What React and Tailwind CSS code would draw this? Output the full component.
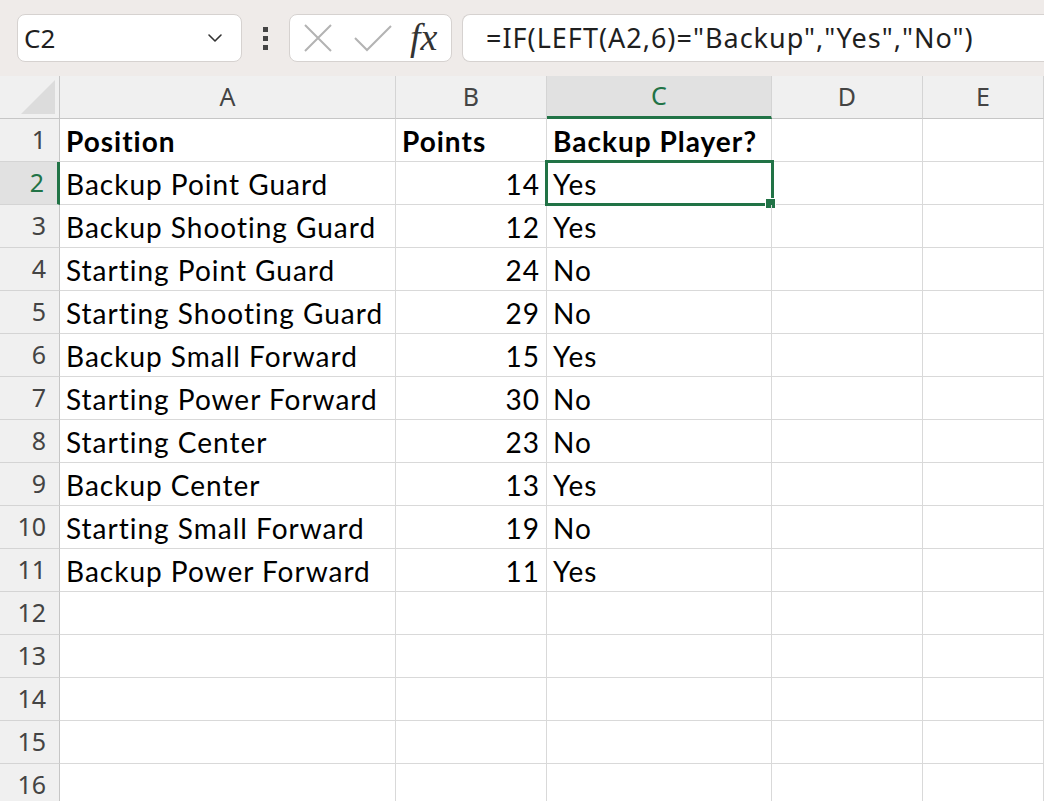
import { ChevronDown } from "lucide-react";

const COLS = ["A", "B", "C", "D", "E"];
const WIDTHS = ["w-[336px]", "w-[151px]", "w-[225px]", "w-[151px]", "flex-1"];

const rows = [
  ["Backup Point Guard", 14, "Yes"],
  ["Backup Shooting Guard", 12, "Yes"],
  ["Starting Point Guard", 24, "No"],
  ["Starting Shooting Guard", 29, "No"],
  ["Backup Small Forward", 15, "Yes"],
  ["Starting Power Forward", 30, "No"],
  ["Starting Center", 23, "No"],
  ["Backup Center", 13, "Yes"],
  ["Starting Small Forward", 19, "No"],
  ["Backup Power Forward", 11, "Yes"],
];

const cellFont = { fontFamily: "Lato, 'Open Sans', sans-serif" };
const uiFont = { fontFamily: "'Noto Sans', 'Open Sans', sans-serif" };

function FormulaBar() {
  return (
    <div className="flex h-[76px] items-center bg-[#efebe9] pl-[17px]" style={uiFont}>
      <div className="flex h-[48px] w-[225px] items-center justify-between rounded-[8px] border border-[#d6d2d0] bg-white pl-[6px] pr-[14px]">
        <span className="text-[26px] text-[#1f1f1f]">C2</span>
        <ChevronDown size={24} strokeWidth={1.6} className="text-[#333]" />
      </div>
      <div className="mx-[21px] flex flex-col gap-[4px]">
        <span className="block h-[5px] w-[5px] bg-[#444]" />
        <span className="block h-[5px] w-[5px] bg-[#444]" />
        <span className="block h-[5px] w-[5px] bg-[#444]" />
      </div>
      <div className="flex h-[48px] w-[163px] items-center rounded-[8px] border border-[#d6d2d0] bg-white">
        <svg width="30" height="30" viewBox="0 0 30 30" className="ml-[13px]">
          <path d="M2 2 L28 28 M28 2 L2 28" stroke="#b3b3b3" strokeWidth="2" fill="none" />
        </svg>
        <svg width="38" height="28" viewBox="0 0 38 28" className="ml-[21px]">
          <path d="M1 14 L13 26 L37 2" stroke="#b3b3b3" strokeWidth="2" fill="none" />
        </svg>
        <span
          className="ml-[18px] mt-[-2px] text-[38px] italic leading-none text-[#333]"
          style={{ fontFamily: "'Liberation Serif', serif" }}
        >
          fx
        </span>
      </div>
      <div className="ml-[10px] flex h-[48px] flex-1 items-center rounded-l-[8px] border border-r-0 border-[#d6d2d0] bg-white pl-[23px]">
        <span className="text-[27px] tracking-[1px] text-[#1f1f1f]">=IF(LEFT(A2,6)="Backup","Yes","No")</span>
      </div>
    </div>
  );
}

function ColumnHeaders() {
  return (
    <div className="flex h-[43px] bg-[#f0f0f0]" style={uiFont}>
      <div className="relative w-[60px] border-r border-b border-[#c6c6c6]">
        <svg width="34" height="34" viewBox="0 0 34 34" className="absolute right-[4px] bottom-[4px]">
          <path d="M34 0 L34 34 L0 34 Z" fill="#dcdcdc" />
        </svg>
      </div>
      {COLS.map((c, i) => {
        const active = c === "C";
        return (
          <div
            key={c}
            className={`${WIDTHS[i]} flex items-center justify-center border-r text-[25px] ${
              active
                ? "border-b-[3px] border-r-[#d4d4d4] border-b-[#217346] bg-[#e1e1e1] text-[#217346]"
                : "border-b border-r-[#d4d4d4] border-b-[#c6c6c6] text-[#444]"
            }`}
          >
            {c}
          </div>
        );
      })}
    </div>
  );
}

function RowHeader({ n }) {
  const active = n === 2;
  return (
    <div
      className={`flex w-[60px] items-center justify-end border-b pr-[13px] text-[25px] ${
        active
          ? "border-r-[3px] border-r-[#217346] border-b-[#d4d4d4] bg-[#e1e1e1] text-[#217346]"
          : "border-r border-r-[#c6c6c6] border-b-[#d4d4d4] bg-[#f0f0f0] text-[#444]"
      }`}
      style={uiFont}
    >
      {n}
    </div>
  );
}

function Cell({ width, children, bold, right }) {
  return (
    <div
      className={`${width} flex items-center overflow-visible whitespace-nowrap border-r border-b border-[#d9d9d9] px-[6px] pt-[1px] text-[28px] tracking-[1px] text-black ${
        bold ? "font-bold" : ""
      } ${right ? "justify-end" : ""}`}
      style={cellFont}
    >
      {children}
    </div>
  );
}

function SheetRow({ n, values, bold }) {
  const [a, b, c] = values;
  return (
    <div className="flex h-[43px]">
      <RowHeader n={n} />
      <Cell width={WIDTHS[0]} bold={bold}>{a}</Cell>
      <Cell width={WIDTHS[1]} bold={bold} right={!bold}>{b}</Cell>
      <div className="relative z-10 flex">
        <Cell width={WIDTHS[2]} bold={bold}>{c}</Cell>
        {n === 2 && (
          <>
            <div className="pointer-events-none absolute left-[-2px] top-[-2px] h-[46px] w-[229px] border-[3px] border-[#217346]" />
            <div className="absolute left-[218px] top-[36px] h-[11px] w-[11px] border border-white bg-[#217346]" />
          </>
        )}
      </div>
      <Cell width={WIDTHS[3]} />
      <Cell width={WIDTHS[4]} />
    </div>
  );
}

export default function App() {
  return (
    <div className="h-[801px] w-[1044px] overflow-hidden bg-white">
      <FormulaBar />
      <ColumnHeaders />
      <SheetRow n={1} values={["Position", "Points", "Backup Player?"]} bold />
      {rows.map((r, i) => (
        <SheetRow key={i} n={i + 2} values={r} />
      ))}
      {[12, 13, 14, 15, 16].map((n) => (
        <SheetRow key={n} n={n} values={["", "", ""]} />
      ))}
    </div>
  );
}
